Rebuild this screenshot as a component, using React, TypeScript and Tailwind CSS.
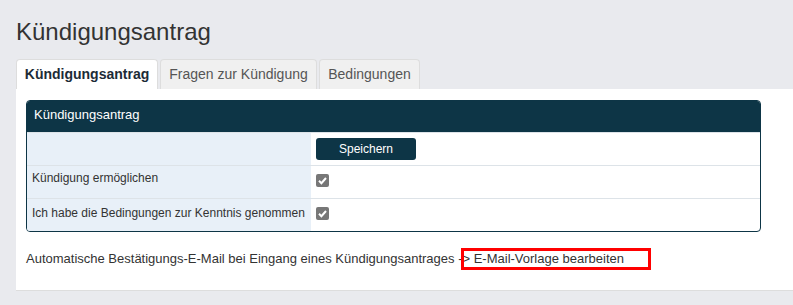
export default function App() {
  return (
    <div className="min-h-[305px] bg-[#e9eaee] pl-4 pt-[14px] font-['Liberation_Sans',Arial,sans-serif] text-[#333]">
      <h1 className="text-[24px] leading-[36px] text-[#333]">Kündigungsantrag</h1>

      {/* tabs */}
      <div className="mt-[9px] flex gap-[2px]">
        <div className="h-[30px] w-[142px] rounded-t-[4px] border border-b-0 border-[#ddd] bg-white text-center text-[14px] font-bold leading-[29px] text-[#1c2b36]">
          Kündigungsantrag
        </div>
        <div className="h-[30px] w-[157px] rounded-t-[4px] border border-b-0 border-[#ddd] bg-[#f0f0f0] text-center text-[14px] leading-[29px] text-[#555]">
          Fragen zur Kündigung
        </div>
        <div className="h-[30px] w-[101px] rounded-t-[4px] border border-b-0 border-[#ddd] bg-[#f0f0f0] text-center text-[14px] leading-[29px] text-[#555]">
          Bedingungen
        </div>
      </div>

      <div className="h-[202px] border-b border-[#ddd] bg-white px-[10px] pt-[11px]">
        <div className="w-[735px] overflow-hidden rounded-[4px] border border-[#0d3546]">
          <div className="h-[31px] bg-[#0d3546] pl-[7px] text-[13px] leading-[28px] text-white">
            Kündigungsantrag
          </div>
          <div className="grid grid-cols-[284px_1fr] text-[12px]">
            <div className="h-[33px] border-t border-[#dde3e8] bg-[#e8f0f8]" />
            <div className="h-[33px] border-t border-[#dde3e8] pl-[5px] pt-[5px]">
              <button className="h-[22px] w-[100px] rounded-[3px] bg-[#0d3546] text-[12px] text-white">
                Speichern
              </button>
            </div>

            <div className="h-[33px] border-t border-[#dde3e8] bg-[#e8f0f8] pl-[5px] pt-[3px]">
              Kündigung ermöglichen
            </div>
            <div className="h-[33px] border-t border-[#dde3e8] pl-[5px] pt-[8px]">
              <Check />
            </div>

            <div className="h-[33px] border-t border-[#dde3e8] bg-[#e8f0f8] pl-[5px] pt-[5px]">
              Ich habe die Bedingungen zur Kenntnis genommen
            </div>
            <div className="h-[33px] border-t border-[#dde3e8] pl-[5px] pt-[8px]">
              <Check />
            </div>
          </div>
        </div>

        <p className="mt-[17px] text-[13px] text-[#333]">
          Automatische Bestätigungs-E-Mail bei Eingang eines Kündigungsantrages -
          <span className="relative">
            &gt; E-Mail-Vorlage bearbeiten
            <span className="absolute -bottom-[4px] -left-[1px] -right-[27px] -top-[3px] border-[3px] border-[#f00]" />
          </span>
        </p>
      </div>
    </div>
  );
}

function Check() {
  return (
    <svg width="13" height="13" viewBox="0 0 13 13">
      <rect width="13" height="13" rx="2" fill="#777" />
      <path d="M3 6.8 L5.4 9.2 L10 4" stroke="#fff" strokeWidth="2" fill="none" />
    </svg>
  );
}
